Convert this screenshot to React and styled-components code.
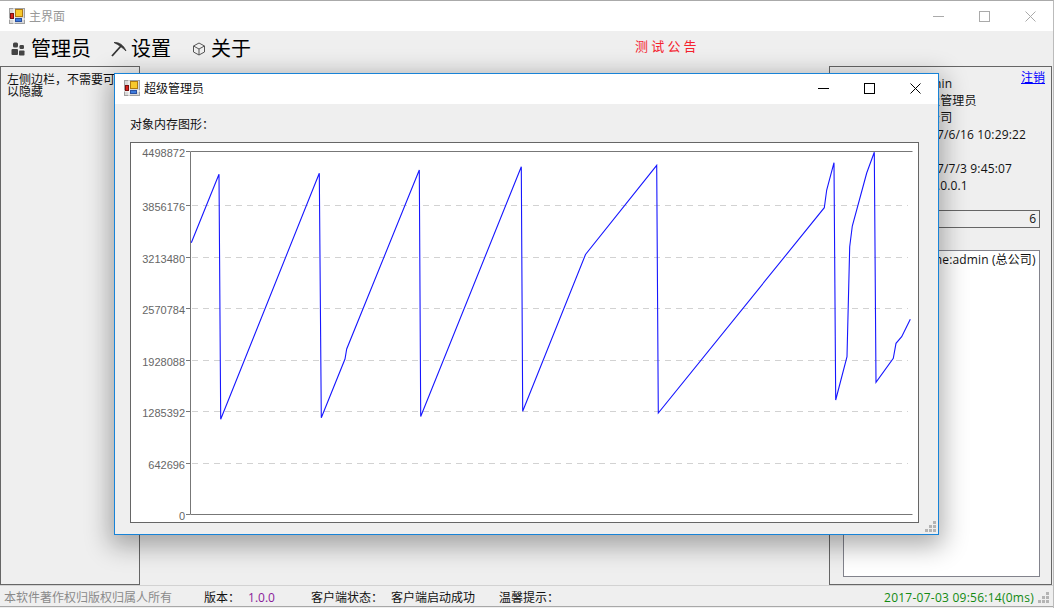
import React from "react";
import styled, { createGlobalStyle } from "styled-components";

const FONT = `"Open Sans", "Noto Sans CJK SC", sans-serif`;

const Global = createGlobalStyle`
  html, body { margin: 0; padding: 0; background: #efefef; overflow: hidden; }
  * { box-sizing: border-box; }
`;

const Desktop = styled.div`
  position: relative;
  width: 1054px;
  height: 608px;
  display: flex;
  flex-direction: column;
  background: #efefef;
  border-top: 1px solid #aaa;
  border-right: 1px solid #bbb;
  font: 12px/17px ${FONT};
  color: #111;
  overflow: hidden;
`;

const TitleBar = styled.div`
  height: ${p => p.$h}px;
  flex: none;
  display: flex;
  align-items: center;
  background: #fff;
  padding-left: ${p => p.$pad}px;
  padding-bottom: ${p => p.$bottom || 0}px;
  color: ${p => p.$color};
`;
const TitleText = styled.span`
  margin-left: ${p => p.$gap}px;
  flex: 1;
`;
const WinButton = styled.button`
  width: 46px;
  height: 100%;
  padding: 0;
  border: 0;
  background: none;
  display: flex;
  align-items: center;
  justify-content: center;
`;

const MenuBar = styled.div`
  height: 35px;
  flex: none;
  display: flex;
  align-items: center;
  padding-left: 11px;
`;
const MenuItem = styled.div`
  display: flex;
  align-items: center;
  gap: ${p => p.$gap}px;
  margin-right: ${p => p.$right}px;
  font-size: 20px;
  line-height: 28px;
  color: #000;
`;
const Notice = styled.div`
  margin-left: 384px;
  margin-top: -4px;
  color: #f5222e;
  font-size: 13px;
  letter-spacing: 3.2px;
`;

const Middle = styled.div`
  flex: 1;
  min-height: 0;
  display: flex;
  justify-content: space-between;
  padding-right: 1px;
`;
const LeftPanel = styled.aside`
  width: 140px;
  border: 1px solid #666;
  padding: 7px 0 0 6px;
  line-height: 12px;
`;
const LeftText = styled.div`
  width: 110px;
`;
const RightPanel = styled.aside`
  width: 223px;
  border: 1px solid #666;
  padding: 8px 11px 7px 13px;
  display: flex;
  flex-direction: column;
`;
const InfoRow = styled.div`
  height: 17px;
  white-space: nowrap;
  display: flex;
  justify-content: space-between;
  letter-spacing: 0.15px;
`;
const Logout = styled.a`
  color: #0000ff;
  text-decoration: underline;
  letter-spacing: 0;
  margin-top: -6px;
  margin-right: -5px;
`;
const CountBox = styled.div`
  height: 18px;
  margin-top: 16px;
  border: 1px solid #666;
  text-align: right;
  padding-right: 3px;
  line-height: 16px;
`;
const ListBox = styled.div`
  flex: 1;
  margin-top: 22px;
  border: 1px solid #82838c;
  background: #fff;
  padding: 0 3px 0 2px;
  line-height: 18px;
  letter-spacing: 0.13px;
  white-space: nowrap;
`;

const StatusBar = styled.footer`
  height: 22px;
  flex: none;
  display: flex;
  align-items: center;
  position: relative;
  margin-bottom: 1px;
  border-top: 1px solid #d2d2d2;
  border-bottom: 1px solid #a8a8a8;
  padding: 2px 0 0 4px;
  white-space: nowrap;
`;
const StatusText = styled.span`
  color: ${p => p.$color || "#111"};
  margin-left: ${p => p.$left || 0}px;
`;
const StatusTime = styled.span`
  margin-left: auto;
  margin-right: 19px;
  color: #128a12;
  letter-spacing: 0.25px;
`;
const Grip = styled.svg`
  position: absolute;
  right: ${p => p.$r}px;
  bottom: ${p => p.$b}px;
`;

const Dialog = styled.section`
  position: absolute;
  left: 114px;
  top: 72px;
  width: 825px;
  height: 462px;
  display: flex;
  flex-direction: column;
  background: #efefef;
  border: 1px solid #1883d7;
  box-shadow: 0 7px 24px 4px rgba(0, 0, 0, 0.32);
`;
const DialogBody = styled.div`
  flex: 1;
  padding: 12px 19px 12px 15px;
  display: flex;
  flex-direction: column;
`;
const ChartLabel = styled.div`
  height: 17px;
  margin-bottom: 9px;
`;
const ChartBox = styled.div`
  flex: 1;
  border: 1px solid #666;
  background: #fff;
  display: flex;
`;
const AxisLabel = styled.text`
  font: 11px "Liberation Sans", sans-serif;
  fill: #666;
  text-anchor: end;
`;

const AppIcon = () => (
  <svg width="16" height="16" viewBox="0 0 16 16">
    <rect x="0.5" y="0.5" width="15" height="15" fill="#d8d8d8" stroke="#a0a0a0" />
    <path d="M5 0v16M0 11h16" stroke="#fff" strokeWidth="1" />
    <rect x="6.5" y="1.5" width="7" height="7" fill="#f8c92c" stroke="#b07a10" />
    <rect x="1.5" y="5.5" width="3" height="5" fill="#d8231c" stroke="#7a1010" />
    <rect x="6.5" y="10.5" width="6" height="3" fill="#3d7bdc" stroke="#2a50a0" />
  </svg>
);

const MinIcon = ({ c }) => (
  <svg width="11" height="11" viewBox="0 0 11 11"><path d="M0 5.5h11" stroke={c} fill="none" /></svg>
);
const MaxIcon = ({ c }) => (
  <svg width="11" height="11" viewBox="0 0 11 11"><rect x="0.5" y="0.5" width="10" height="10" stroke={c} fill="none" /></svg>
);
const CloseIcon = ({ c }) => (
  <svg width="11" height="11" viewBox="0 0 11 11"><path d="M0.5 0.5l10 10M10.5 0.5l-10 10" stroke={c} fill="none" /></svg>
);

const GroupIcon = () => (
  <svg width="14" height="14" viewBox="0 0 14 14" fill="#444">
    <rect x="2" y="0.5" width="5" height="5" rx="1.5" />
    <rect x="0.5" y="7" width="6.5" height="6" rx="1" />
    <rect x="8.5" y="3" width="4.5" height="4" rx="1.2" />
    <rect x="8" y="8.5" width="5.5" height="5" rx="0.8" />
  </svg>
);
const PickIcon = () => (
  <svg width="16" height="16" viewBox="0 0 16 16" fill="none" stroke="#333">
    <path d="M1 15L10 5" strokeWidth="1.8" />
    <path d="M3 1.5C8 1 12.5 4 15 10C12 7 8 4 3 1.5z" fill="#333" strokeWidth="0.8" />
  </svg>
);
const CubeIcon = () => (
  <svg width="14" height="14" viewBox="0 0 14 14" fill="none" stroke="#555">
    <path d="M7 1l5.5 3v6L7 13l-5.5-3V4z" />
    <path d="M1.5 4L7 7l5.5-3M7 7v6" />
  </svg>
);
const GripIcon = ({ r, b }) => (
  <Grip $r={r} $b={b} width="12" height="12" viewBox="0 0 12 12" fill="#b4b4b4">
    <rect x="8" y="0" width="3" height="3" />
    <rect x="4" y="4" width="3" height="3" />
    <rect x="8" y="4" width="3" height="3" />
    <rect x="0" y="8" width="3" height="3" />
    <rect x="4" y="8" width="3" height="3" />
    <rect x="8" y="8" width="3" height="3" />
  </Grip>
);

const TICKS = [
  ["4498872", 151.5],
  ["3856176", 205.5],
  ["3213480", 257.5],
  ["2570784", 308.5],
  ["1928088", 360.5],
  ["1285392", 411.5],
  ["642696", 463.5],
  ["0", 514.5],
];

const POINTS =
  "191.3,242.7 219,174.3 220.7,419.3 319.3,173.3 321.3,417.7 345,359 346.7,349 419.3,170 420.7,416.5 521.3,166.7 522.7,411.3 " +
  "585.5,254.5 656.7,165.3 658.3,413 824.3,207.7 826.7,190 834,162.7 835.7,400 847,356.7 849.7,246.7 852.3,226 866.7,173 874.3,152.3 " +
  "876,382.3 893.3,358.3 896,343.3 901.7,336.7 910.3,319.3";

const Chart = () => (
  <svg width="787" height="379" viewBox="131 143 787 379">
    {TICKS.slice(1, 7).map(([, y]) => (
      <path key={y} d={`M192 ${y}H908`} stroke="#d2d2d2" strokeDasharray="6 5" fill="none" />
    ))}
    <path d="M190.5 151.5V514.5H912.5M190.5 151.5H912.5" stroke="#777" fill="none" />
    {TICKS.map(([label, y]) => (
      <React.Fragment key={label}>
        <path d={`M186 ${y}H190`} stroke="#777" fill="none" />
        <AxisLabel x="185" y={y + 5.5}>{label}</AxisLabel>
      </React.Fragment>
    ))}
    <polyline points={POINTS} fill="none" stroke="#1616ff" strokeWidth="1.1" />
  </svg>
);

export default function App() {
  return (
    <Desktop>
      <Global />
      <TitleBar $h={30} $pad={9} $color="#999">
        <AppIcon />
        <TitleText $gap={4}>主界面</TitleText>
        <WinButton><MinIcon c="#aaa" /></WinButton>
        <WinButton><MaxIcon c="#aaa" /></WinButton>
        <WinButton><CloseIcon c="#aaa" /></WinButton>
      </TitleBar>
      <MenuBar>
        <MenuItem $gap={6} $right={20}><GroupIcon />管理员</MenuItem>
        <MenuItem $gap={4} $right={21}><PickIcon />设置</MenuItem>
        <MenuItem $gap={5} $right={0}><CubeIcon />关于</MenuItem>
        <Notice>测试公告</Notice>
      </MenuBar>
      <Middle>
        <LeftPanel>
          <LeftText>左侧边栏，不需要可以隐藏</LeftText>
        </LeftPanel>
        <RightPanel>
          <InfoRow><span>登录账户名：admin</span><Logout>注销</Logout></InfoRow>
          <InfoRow>用户权限为：超级管理员</InfoRow>
          <InfoRow>所属分公司：总公司</InfoRow>
          <InfoRow>用户注册于：2017/6/16 10:29:22</InfoRow>
          <InfoRow>上次登录：</InfoRow>
          <InfoRow>登录时间为：2017/7/3 9:45:07</InfoRow>
          <InfoRow>登录地址为：127.0.0.1</InfoRow>
          <CountBox>6</CountBox>
          <ListBox>IP:127.0.0.1 Name:admin (总公司)</ListBox>
        </RightPanel>
      </Middle>
      <StatusBar>
        <StatusText $color="#8a8a8a">本软件著作权归版权归属人所有</StatusText>
        <StatusText $left={32}>版本：</StatusText>
        <StatusText $left={8} $color="#8a1a9a">1.0.0</StatusText>
        <StatusText $left={36}>客户端状态：</StatusText>
        <StatusText $left={8}>客户端启动成功</StatusText>
        <StatusText $left={24}>温馨提示：</StatusText>
        <StatusTime>2017-07-03 09:56:14(0ms)</StatusTime>
        <GripIcon r={3} b={2} />
      </StatusBar>
      <Dialog>
        <TitleBar $h={30} $pad={9} $bottom={2} $color="#111">
          <AppIcon />
          <TitleText $gap={4}>超级管理员</TitleText>
          <WinButton><MinIcon c="#000" /></WinButton>
          <WinButton><MaxIcon c="#000" /></WinButton>
          <WinButton><CloseIcon c="#000" /></WinButton>
        </TitleBar>
        <DialogBody>
          <ChartLabel>对象内存图形：</ChartLabel>
          <ChartBox><Chart /></ChartBox>
        </DialogBody>
        <GripIcon r={1} b={1} />
      </Dialog>
    </Desktop>
  );
}
